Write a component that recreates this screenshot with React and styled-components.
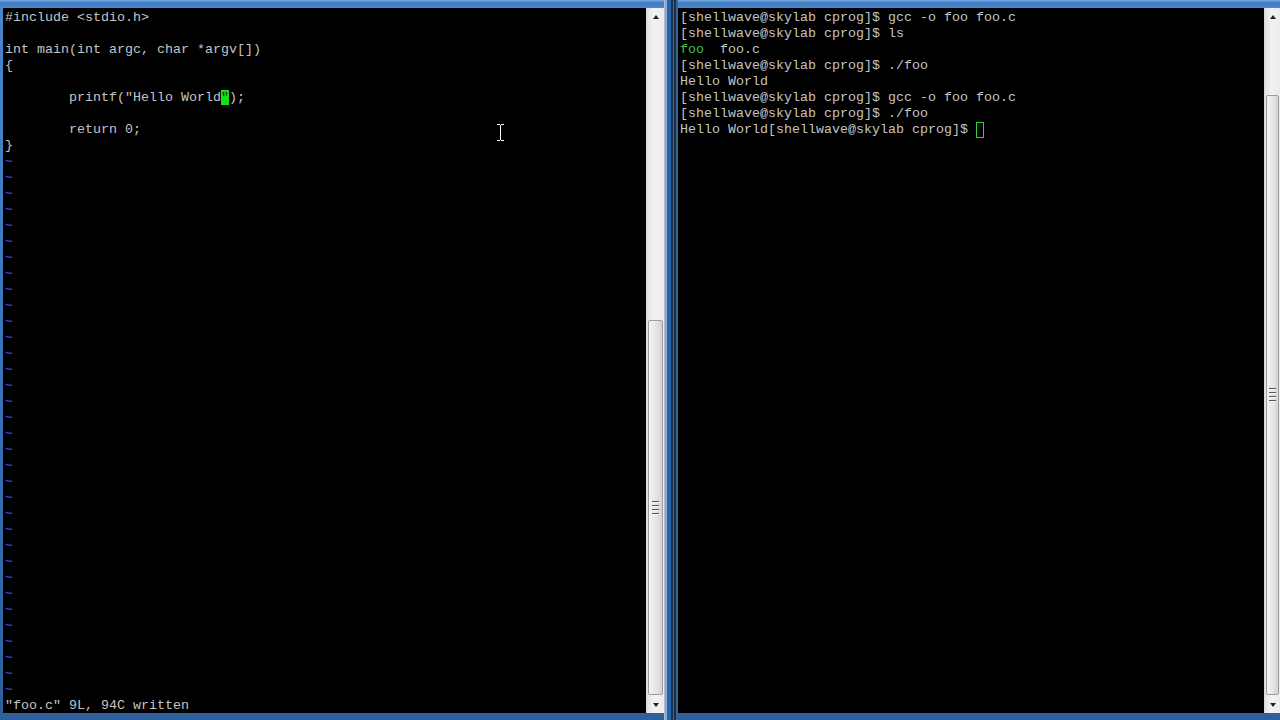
import React from 'react';
import styled, { createGlobalStyle } from 'styled-components';

const GlobalStyle = createGlobalStyle`
  html, body {
    margin: 0;
    padding: 0;
    background: #000;
    overflow: hidden;
  }
  #root {
    width: 1280px;
    height: 720px;
  }
`;

const Desktop = styled.div`
  display: flex;
  width: 1280px;
  height: 720px;
`;

const Window = styled.div`
  display: flex;
  box-sizing: border-box;
  width: ${({ $width }) => $width}px;
  height: 720px;
  padding: ${({ $pad }) => $pad};
  background:
    ${({ $edge }) => $edge},
    linear-gradient(to bottom, #79a9e0 0, #3f7cc6 3px, #4a86cc 8px, #2d5f9c 100%);
`;

const Pane = styled.div`
  position: relative;
  flex: 1;
  background: #000;
  padding: 2px 0 0 2px;
  overflow: hidden;
`;

const Line = styled.div`
  height: 16px;
  line-height: 16px;
  white-space: pre;
  font-family: "Liberation Mono", "DejaVu Sans Mono", monospace;
  font-size: 13.33px;
  color: ${({ $color }) => $color || '#c4c4c4'};
`;

const Green = styled.span`
  color: #45c145;
`;

const BlockCursor = styled.span`
  background: #16e016;
  color: #0a3a0a;
`;

const BoxCursor = styled.span`
  display: inline-block;
  box-sizing: border-box;
  width: 8px;
  height: 16px;
  vertical-align: top;
  border: 1px solid #2fd42f;
`;

const IBeam = styled.svg`
  position: absolute;
  left: 493px;
  top: 116px;
`;

const ScrollBar = styled.div`
  display: flex;
  flex-direction: column;
  width: ${({ $width }) => $width}px;
  background: linear-gradient(to right, #e2e2e2, #f2f2f2 40%, #ececec);
  border-left: 1px solid #d8d8d8;
`;

const ArrowButton = styled.div`
  display: flex;
  align-items: center;
  justify-content: center;
  height: 17px;
  &::before {
    content: '';
    border-left: 3.5px solid transparent;
    border-right: 3.5px solid transparent;
    ${({ $down }) => ($down ? 'border-top: 4px solid #202020;' : 'border-bottom: 4px solid #202020;')}
  }
`;

const Track = styled.div`
  flex: 1;
  display: flex;
  flex-direction: column;
  padding: 0 1px;
`;

const Thumb = styled.div`
  display: flex;
  flex-direction: column;
  align-items: center;
  justify-content: center;
  gap: 2px;
  box-sizing: border-box;
  margin-top: ${({ $top }) => $top}px;
  height: ${({ $height }) => $height}px;
  border: 1px solid #9c9c9c;
  border-radius: 2px;
  background: linear-gradient(to right, #f4f4f4, #e6e6e6 50%, #d4d4d4);
`;

const Grip = styled.div`
  width: 7px;
  height: 1px;
  background: #555;
  border-bottom: 1px solid #f8f8f8;
`;

function Scroll({ width, top, height }) {
  return (
    <ScrollBar $width={width}>
      <ArrowButton />
      <Track>
        <Thumb $top={top} $height={height}>
          <Grip />
          <Grip />
          <Grip />
          <Grip />
        </Thumb>
      </Track>
      <ArrowButton $down />
    </ScrollBar>
  );
}

const code = [
  '#include <stdio.h>',
  '',
  'int main(int argc, char *argv[])',
  '{',
  '',
  null,
  '',
  '        return 0;',
  '}',
];

const tildes = Array.from({ length: 34 }, () => '~');

const prompt = '[shellwave@skylab cprog]$ ';

const leftEdge = 'linear-gradient(to left, #1b3350 0 1px, #2c62a8 1px 5px, #7aaee4 5px 7px, #bcbcbc 7px 8px, transparent 8px)';
const rightEdge = 'linear-gradient(to right, #1a2e46 0 1px, #3d6896 1px 2px, #16304c 2px 4px, #3a6590 4px 6px, transparent 6px)';

export default function App() {
  return (
    <>
      <GlobalStyle />
      <Desktop>
        <Window $width={672} $pad="8px 8px 7px 3px" $edge={leftEdge}>
          <Pane>
            {code.map((text, i) =>
              text === null ? (
                <Line key={i}>
                  {'        printf("Hello World'}
                  <BlockCursor>"</BlockCursor>
                  {');'}
                </Line>
              ) : (
                <Line key={i}>{text}</Line>
              )
            )}
            {tildes.map((t, i) => (
              <Line key={`t${i}`} $color="#4a4aff">{t}</Line>
            ))}
            <Line>"foo.c" 9L, 94C written</Line>
            <IBeam width="9" height="17" viewBox="0 0 9 17">
              <path d="M1 0.5h3M5 0.5h3M4.5 1v15M1 16.5h3M5 16.5h3" stroke="#fff" strokeWidth="1" fill="none" />
            </IBeam>
          </Pane>
          <Scroll width={17} top={295} height={375} />
        </Window>
        <Window $width={608} $pad="8px 0 7px 6px" $edge={rightEdge}>
          <Pane>
            <Line>{prompt}gcc -o foo foo.c</Line>
            <Line>{prompt}ls</Line>
            <Line><Green>foo</Green>  foo.c</Line>
            <Line>{prompt}./foo</Line>
            <Line>Hello World</Line>
            <Line>{prompt}gcc -o foo foo.c</Line>
            <Line>{prompt}./foo</Line>
            <Line>Hello World{prompt}<BoxCursor /></Line>
          </Pane>
          <Scroll width={15} top={70} height={600} />
        </Window>
      </Desktop>
    </>
  );
}
